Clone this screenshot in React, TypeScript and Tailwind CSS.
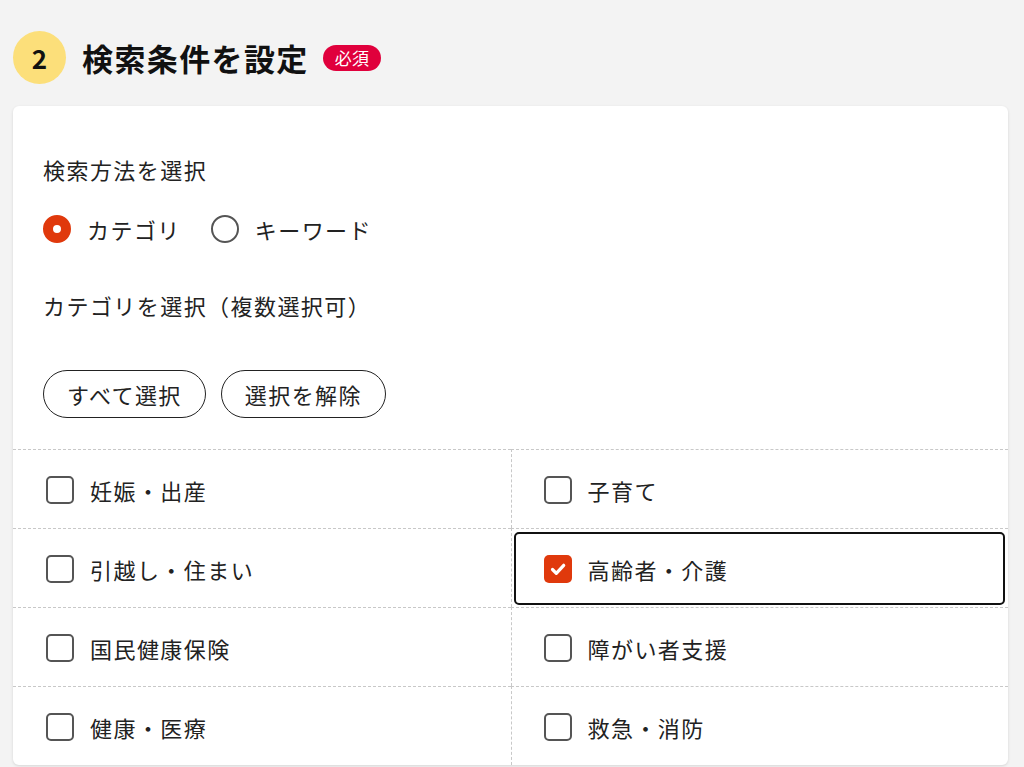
import {useState} from "react";

const categories = [
    "妊娠・出産",
    "子育て",
    "引越し・住まい",
    "高齢者・介護",
    "国民健康保険",
    "障がい者支援",
    "健康・医療",
    "救急・消防",
];

const font = {fontFamily: '"Noto Sans CJK JP", "Noto Sans", sans-serif'};

const Check = () => (
    <svg viewBox="0 0 28 28" className="w-[28px] h-[28px]">
        <path d="M8.5 14.5l3.8 3.8 7.4-8" fill="none" stroke="#fff" strokeWidth="3.2" strokeLinecap="round"
              strokeLinejoin="round"/>
    </svg>
);

export default function App() {
    const [mode, setMode] = useState("category");
    const [checked, setChecked] = useState<string[]>(["高齢者・介護"]);

    const toggle = (c: string) =>
        setChecked((prev) => (prev.includes(c) ? prev.filter((x) => x !== c) : [...prev, c]));

    return (
        <div className="min-h-screen bg-[#f3f3f3] pt-[31px] text-[#222] tracking-[0.09em]" style={font}>
            <div className="flex items-center ml-[13px] h-[53px]">
                <div
                    className="w-[53px] h-[53px] rounded-full bg-[#fcdf7a] flex items-center justify-center text-[26px] font-bold text-[#111] tracking-normal">
                    2
                </div>
                <h2 className="ml-[16px] text-[31px] font-bold text-[#111] leading-none tracking-[0.045em]">検索条件を設定</h2>
                <span
                    className="ml-[14px] h-[26px] px-[12px] rounded-full bg-[#e0003c] text-white text-[17px] leading-[26px] tracking-[0.02em]">
                    必須
                </span>
            </div>

            <div className="ml-[13px] mt-[22px] w-[995px] bg-white rounded-md shadow-[0_1px_3px_rgba(0,0,0,0.12)] overflow-hidden">
                <div className="px-[30px] pt-[47px]">
                    <p className="text-[22px] leading-[32px]">検索方法を選択</p>
                    <div className="mt-[30px] flex items-center h-[28px]">
                        <button onClick={() => setMode("category")} className="flex items-center">
                            <span
                                className={`w-[28px] h-[28px] rounded-full box-border ${mode === "category" ? "border-[10px] border-[#e0390c]" : "border-[2.5px] border-[#555]"}`}/>
                            <span className="ml-[16px] text-[22px] leading-[28px]">カテゴリ</span>
                        </button>
                        <button onClick={() => setMode("keyword")} className="flex items-center ml-[30px]">
                            <span
                                className={`w-[28px] h-[28px] rounded-full box-border ${mode === "keyword" ? "border-[10px] border-[#e0390c]" : "border-[2.5px] border-[#555]"}`}/>
                            <span className="ml-[16px] text-[22px] leading-[28px]">キーワード</span>
                        </button>
                    </div>

                    <p className="mt-[46px] text-[22px] leading-[32px]">カテゴリを選択（複数選択可）</p>

                    <div className="mt-[49px] flex gap-[15px]">
                        <button
                            onClick={() => setChecked([...categories])}
                            className="h-[48px] px-[23px] rounded-full border-[1.5px] border-[#222] text-[22px] bg-white">
                            すべて選択
                        </button>
                        <button
                            onClick={() => setChecked([])}
                            className="h-[48px] px-[23px] rounded-full border-[1.5px] border-[#222] text-[22px] bg-white">
                            選択を解除
                        </button>
                    </div>
                </div>

                <div className="mt-[31px] grid grid-cols-2">
                    {categories.map((c, i) => {
                        const on = checked.includes(c);
                        const right = i % 2 === 1;
                        return (
                            <div
                                key={c}
                                className={`h-[79px] border-t border-dashed border-[#c8c8c8] flex ${right ? "border-l" : ""}`}
                            >
                                <label
                                    onClick={() => toggle(c)}
                                    className={`flex-1 mt-[3px] mr-[3px] mb-[2px] ${right ? "ml-[2px]" : "ml-[3px]"} rounded-[5px] border-2 flex items-center pl-[28px] cursor-pointer ${on ? "border-[#111]" : "border-transparent"}`}
                                >
                                    <span
                                        className={`w-[28px] h-[28px] rounded-[5px] box-border flex items-center justify-center ${on ? "bg-[#e0390c]" : "border-2 border-[#555]"}`}>
                                        {on && <Check/>}
                                    </span>
                                    <span className="ml-[16px] text-[22px] leading-[28px]">{c}</span>
                                </label>
                            </div>
                        );
                    })}
                </div>
            </div>
        </div>
    );
}
